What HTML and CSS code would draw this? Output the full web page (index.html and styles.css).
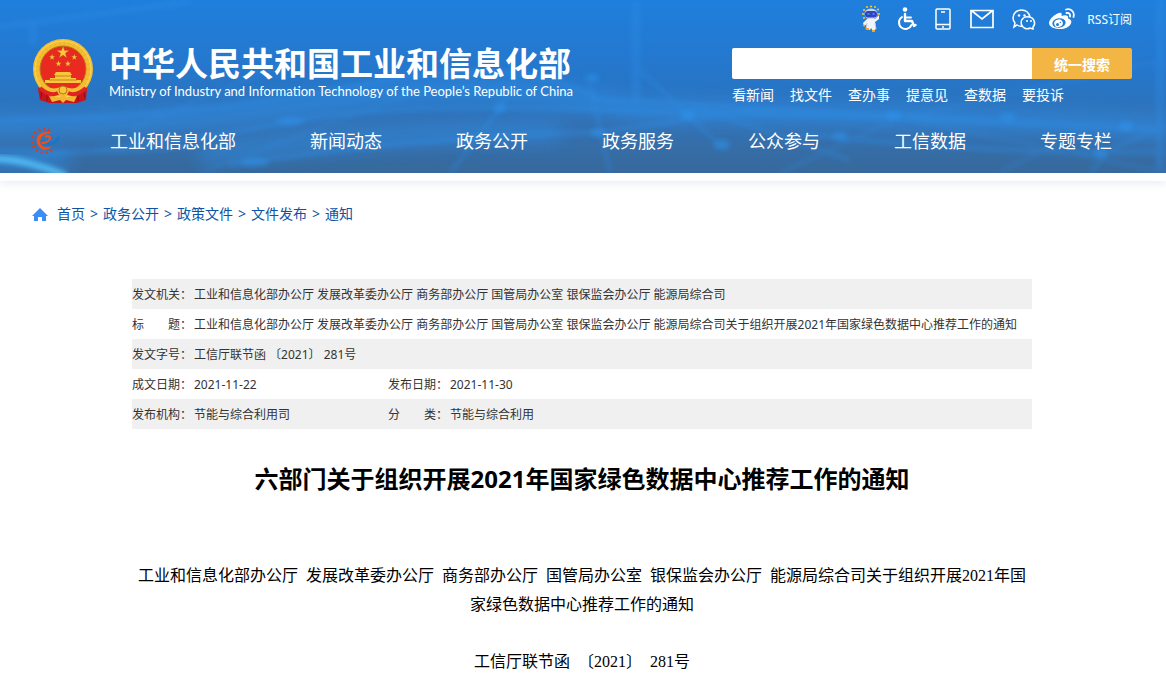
FILE: index.html
```html
<!DOCTYPE html>
<html lang="zh-CN">
<head>
  <meta charset="UTF-8" />
  <title>六部门关于组织开展2021年国家绿色数据中心推荐工作的通知</title>
  <link rel="stylesheet" href="styles.css">
</head>
<body>
  <header class="header">
    <svg class="header-bg" viewBox="0 0 1166 173" preserveAspectRatio="none" aria-hidden="true">
      <defs>
        <filter id="soft" x="-20%" y="-20%" width="140%" height="140%"><feGaussianBlur stdDeviation="2.500" /></filter>
        <filter id="glow" x="-50%" y="-50%" width="200%" height="200%"><feGaussianBlur stdDeviation="9" /></filter>
      </defs>
      <g fill="none" stroke="#2f8fe8" filter="url(#glow)" opacity=".6">
        <path d="M-20 125Q200 125 340 100T640 110L900 116L1166 128" stroke-width="20" />
        <path d="M200 155Q400 130 560 132" stroke-width="16" />
        <path d="M-10 162H70" stroke-width="16" />
      </g>
      <g fill="none" stroke="#2f8fe8" stroke-width="4" opacity=".45" filter="url(#soft)">
        <path d="M-10 28L190 2M-10 120Q200 118 360 85T600 100L1166 130M-10 162Q200 140 300 120T660 112L900 118L1166 130" />
        <path d="M-10 150Q120 155 200 145M230 165Q400 138 600 132L760 110M800 134Q1000 155 1166 152" />
        <path d="M450 173L495 115L520 75M610 173L590 85M720 145L640 70M850 160L690 105M1090 173L1110 150L1166 125" opacity=".7" />
        <path d="M780 173L900 118L1166 60M1000 173L1090 125M890 115L1166 173M200 173L420 90M130 130L290 60" opacity=".5" />
        <path d="M636 0V105M33 20V45M1160 0V170" stroke-width="9" opacity=".7" />
      </g>
      <g fill="#2f95f0" opacity=".5" filter="url(#soft)">
        <ellipse cx="290" cy="121" rx="14" ry="4" />
        <ellipse cx="255" cy="162" rx="14" ry="4" />
        <ellipse cx="500" cy="108" rx="6" ry="5" />
        <ellipse cx="592" cy="78" rx="7" ry="4" />
        <ellipse cx="688" cy="115" rx="7" ry="5" />
        <ellipse cx="722" cy="145" rx="8" ry="5" />
        <ellipse cx="598" cy="133" rx="8" ry="4" />
        <ellipse cx="840" cy="136" rx="8" ry="4" />
        <ellipse cx="893" cy="115" rx="8" ry="4" />
        <ellipse cx="1008" cy="117" rx="8" ry="4" />
        <ellipse cx="1126" cy="126" rx="7" ry="5" />
        <ellipse cx="1100" cy="153" rx="7" ry="5" />
      </g>
      <path d="M-10 158Q30 160 66 176" fill="none" stroke="#55c3fa" stroke-width="7" opacity=".85" filter="url(#soft)" />
    </svg>

    <div class="wrap">
      <div class="header-top">
        <a href="#" class="brand">
          <svg class="emblem" viewBox="0 0 62 66" role="img" aria-label="国徽">
            <path d="M9 45L6 51L8 62L17 65H45L54 62L55 50L52 44Z" fill="#c9141b" />
            <path d="M10 50L9 60M15 54V63M51 50L53 60M46 54V63" stroke="#8e0d13" stroke-width="1" />
            <circle cx="31" cy="31" r="30" fill="#f5be31" />
            <circle cx="31" cy="31" r="26.500" fill="none" stroke="#d79a22" stroke-width="5" stroke-dasharray="1 4" opacity=".3" />
            <circle cx="31" cy="31" r="28" fill="none" stroke="#ffdb62" stroke-width="1" opacity=".8" />
            <circle cx="31" cy="31" r="23" fill="#e92a20" stroke="#b9791b" stroke-width="1" />
            <g fill="#f8c83d" stroke="#a9691a" stroke-width=".3">
              <path id="star" d="M31 8L32.500 12.500H37L33.300 15.200L34.700 19.700L31 17L27.300 19.700L28.700 15.200L25 12.500H29.500Z" />
              <use href="#star" transform="translate(4.600 12) scale(.5)" />
              <use href="#star" transform="translate(26.800 12) scale(.5)" />
              <use href="#star" transform="translate(11 18.500) scale(.5)" />
              <use href="#star" transform="translate(20.400 18.500) scale(.5)" />
            </g>
            <path d="M24 34H38L40 37H39V40H44V42H49V45H13V42H18V40H23V37H22Z" fill="#f9c63c" />
            <path d="M23 38H39M17 42H45" stroke="#c7831f" stroke-width="1" />
            <path d="M10 45Q19 54 31 48Q43 54 52 45L50 51Q42 57 31 53Q20 57 12 51Z" fill="#f5be31" />
            <path d="M8 50Q18 59 26 55M54 50Q44 59 36 55" fill="none" stroke="#df2222" stroke-width="4" />
            <circle cx="31" cy="52" r="4" fill="#f7c53c" stroke="#b87619" stroke-width="1" />
            <path d="M17 58L26 60L31 57L36 60L45 58L42 64L34 62L31 65L28 62L20 64Z" fill="#f3b631" />
          </svg>
          <span class="brand-text">
            <span class="brand-cn">中华人民共和国工业和信息化部</span>
            <span class="brand-en" lang="en">Ministry of Industry and Information Technology of the People’s Republic of China</span>
          </span>
        </a>

        <div class="tools">
          <div class="icons">
            <a href="#" class="icon" title="智能问答">
              <svg width="24" height="28" viewBox="0 0 24 28">
                <g fill="#ffc51f"><circle cx="8" cy="2" r="1.100" /><circle cx="12" cy="1.500" r="1.100" /><circle cx="16" cy="2" r="1.100" /><circle cx="19" cy="4.500" r="1.100" /><circle cx="5" cy="5" r="1.100" /><circle cx="4" cy="9" r="1.100" /><circle cx="20" cy="9" r="1.100" /><circle cx="5" cy="13" r="1.100" /></g>
                <ellipse cx="12" cy="9" rx="6.500" ry="5.500" fill="#c9d6f3" />
                <rect x="6" y="6" width="12" height="6.500" rx="3" fill="#3540bd" />
                <path d="M8.500 9h2M13.500 9h2" stroke="#32a5f5" stroke-width="1.500" />
                <path d="M8 14L4 18L5 21L8 19L7 24L11 25L12 23L14 26L17 24L16 17L20 14V10L18 12L16 14Z" fill="#f1f4fc" />
                <path d="M8 18L7 24M16 18L17 24" stroke="#bfcbe9" stroke-width="1" />
                <path d="M7 24H10M13 26H16M4 20L6 21" stroke="#f8a51d" stroke-width="1.800" />
              </svg>
            </a>
            <a href="#" class="icon" title="无障碍">
              <svg width="24" height="28" viewBox="0 0 24 28" fill="none" stroke="#fff" stroke-linecap="round" stroke-linejoin="round">
                <circle cx="10" cy="4.500" r="2.300" fill="#fff" stroke="none" />
                <path d="M10 9V16H17L19 21L20.500 20" stroke-width="2.400" />
                <path d="M10 12.500H16" stroke-width="1.800" />
                <path d="M7 12A6.500 6.500 0 1 0 16.500 20" stroke-width="2" />
              </svg>
            </a>
            <a href="#" class="icon" title="手机版">
              <svg width="24" height="28" viewBox="0 0 24 28" fill="none" stroke="#fff">
                <rect x="5" y="4" width="14" height="20" rx="1" stroke-width="1.500" />
                <path d="M5 19.500H19M10 7H14" stroke-width="1.300" />
                <path d="M11 22H13" stroke-width="1.500" />
              </svg>
            </a>
            <a href="#" class="icon" title="邮箱">
              <svg width="30" height="28" viewBox="0 0 30 28" fill="none" stroke="#fff" stroke-width="1.700">
                <path d="M4 5.500H26V22.500H4ZM5 6L15 14L25 6" />
              </svg>
            </a>
            <a href="#" class="icon" title="微信">
              <svg width="28" height="28" viewBox="0 0 28 28" fill="none" stroke="#fff" stroke-width="1.500">
                <path d="M14 21Q11 22 8 20L5 22L6 18A8 8 0 0 1 4 13C4 8 8 5 12.500 5S20 8 21 12" />
                <path d="M20 12A6 6 0 1 0 21 23L24 24V22A6 6 0 0 0 20 12Z" />
                <g fill="#fff" stroke="none"><circle cx="10" cy="10.500" r="1.200" /><circle cx="15.500" cy="10.500" r="1.200" /><circle cx="18" cy="16" r="1" /><circle cx="22" cy="16" r="1" /></g>
              </svg>
            </a>
            <a href="#" class="icon" title="微博">
              <svg width="26" height="28" viewBox="0 0 26 28">
                <path d="M10 8C13 7 13 9 12.500 11C16 9.500 20 10 19 13.500C22 14.500 23 16 22 18.500C20 22.500 15 24.500 9.500 24C3.500 23.500 0 21 0 18C0 14 6 9 10 8Z" fill="#fff" />
                <ellipse cx="10" cy="18" rx="6.700" ry="4.700" transform="rotate(-8 10 18)" fill="#267dcf" />
                <ellipse cx="9.500" cy="18.300" rx="4.300" ry="3.800" transform="rotate(-20 9.500 18.300)" fill="#fff" />
                <circle cx="8.500" cy="19.500" r="1.500" fill="#267dcf" />
                <circle cx="11.300" cy="17.500" r=".7" fill="#267dcf" />
                <path d="M17 4.500C22 3 26 7 24.500 12M17.500 8C20 7.500 21.500 9 21 11.500" fill="none" stroke="#fff" stroke-width="1.800" stroke-linecap="round" />
              </svg>
            </a>
            <a href="#" class="rss">RSS订阅</a>
          </div>

          <form class="search">
            <input type="text" class="search-input" name="q" aria-label="搜索" />
            <button type="submit" class="search-btn">统一搜索</button>
          </form>

          <div class="quick">
            <a href="#">看新闻</a>
            <a href="#">找文件</a>
            <a href="#">查办事</a>
            <a href="#">提意见</a>
            <a href="#">查数据</a>
            <a href="#">要投诉</a>
          </div>
        </div>
      </div>

      <nav class="nav">
        <a href="#" class="nav-logo" aria-label="首页">
          <svg width="28" height="26" viewBox="2 0 28 26" fill="none">
            <path d="M22 22A12 12 0 1 1 21 3" stroke="#e23a1c" stroke-width="3" stroke-dasharray="2 3" />
            <path d="M22 18C19 22 14 22.500 10.500 20C4 15 6 6 13 4.500C17 3.500 21 4 22 5.500C19 5 14.500 5.500 12 8.500C8.500 13 10 18 15 19C18 19.500 20 19 22 18Z" fill="#f4511a" />
            <path d="M12 15C16 15 19 13 20 10.500C21 8 17 7.500 15 9" stroke="#f4511a" stroke-width="2" />
            <path d="M16 17C23 17.500 29 14 30 8L27 9C25.500 13 22 14.500 18 15Z" fill="#1377cb" />
          </svg>
        </a>
        <div class="nav-links">
          <a href="#">工业和信息化部</a>
          <a href="#">新闻动态</a>
          <a href="#">政务公开</a>
          <a href="#">政务服务</a>
          <a href="#">公众参与</a>
          <a href="#">工信数据</a>
          <a href="#">专题专栏</a>
        </div>
      </nav>
    </div>
  </header>
  <div class="header-line"></div>

  <main class="wrap">
    <div class="crumbs">
      <svg class="home" width="16" height="14" viewBox="0 0 16 14" aria-hidden="true">
        <path d="M8 1L16 9H14V14H10V10H6V14H2V9H0Z" fill="#3d8bf5" />
      </svg>
      <a href="#">首页</a>
      <span>&gt;</span>
      <a href="#">政务公开</a>
      <span>&gt;</span>
      <a href="#">政策文件</a>
      <span>&gt;</span>
      <a href="#">文件发布</a>
      <span>&gt;</span>
      <a href="#">通知</a>
    </div>

    <article class="article">
      <table class="info">
        <colgroup>
          <col class="col-label" />
          <col class="col-value" />
          <col class="col-label" />
          <col />
        </colgroup>
        <tr>
          <th>发文机关：</th>
          <td colspan="3">工业和信息化部办公厅 发展改革委办公厅 商务部办公厅 国管局办公室 银保监会办公厅 能源局综合司</td>
        </tr>
        <tr>
          <th>标　　题：</th>
          <td colspan="3">工业和信息化部办公厅 发展改革委办公厅 商务部办公厅 国管局办公室 银保监会办公厅 能源局综合司关于组织开展2021年国家绿色数据中心推荐工作的通知</td>
        </tr>
        <tr>
          <th>发文字号：</th>
          <td colspan="3">工信厅联节函 〔2021〕 281号</td>
        </tr>
        <tr>
          <th>成文日期：</th>
          <td>2021-11-22</td>
          <th>发布日期：</th>
          <td>2021-11-30</td>
        </tr>
        <tr>
          <th>发布机构：</th>
          <td>节能与综合利用司</td>
          <th>分　　类：</th>
          <td>节能与综合利用</td>
        </tr>
      </table>

      <h1>六部门关于组织开展2021年国家绿色数据中心推荐工作的通知</h1>

      <div class="content">
        <p>工业和信息化部办公厅&nbsp; 发展改革委办公厅&nbsp; 商务部办公厅&nbsp; 国管局办公室&nbsp; 银保监会办公厅&nbsp; 能源局综合司关于组织开展2021年国家绿色数据中心推荐工作的通知</p>
        <p>工信厅联节函&nbsp; 〔2021〕&nbsp; 281号</p>
      </div>
    </article>
  </main>
</body>
</html>
```
FILE: styles.css
```css
body {
  margin: 0;
  background: #fff;
  color: #333;
  font-family: "Noto Sans", "Noto Sans CJK SC", sans-serif;
  font-size: 12px;
}

a {
  color: inherit;
  text-decoration: none;
}

.wrap {
  max-width: 1100px;
  margin: 0 auto;
  padding: 0 34px 0 32px;
}

/* header */
.header {
  position: relative;
  background: linear-gradient(#1f7fdd, #2676c9 45%, #3470b0 75%, #37699c);
  color: #fff;
}

.header-bg {
  position: absolute;
  left: 0;
  top: 0;
  width: 100%;
  height: 100%;
}

.header .wrap {
  position: relative;
}

.header-line {
  height: 8px;
  background: #fff;
  box-shadow: 0 2px 8px #e3e9f5;
}

.header-top {
  display: flex;
  justify-content: space-between;
}

.brand {
  display: flex;
  gap: 15px;
  padding-top: 38px;
}

.emblem {
  width: 62px;
  height: 66px;
}

.brand-text {
  display: flex;
  flex-direction: column;
  padding-top: 4px;
  white-space: nowrap;
}

.brand-cn {
  font-family: "Noto Sans CJK SC", sans-serif;
  font-size: 33px;
  font-weight: bold;
  line-height: 40px;
}

.brand-en {
  font-family: Lato, "Noto Sans", sans-serif;
  font-size: 13px;
  line-height: 18px;
}

.tools {
  width: 400px;
}

.icons {
  display: flex;
  justify-content: flex-end;
  align-items: center;
  gap: 12px;
  height: 38px;
}

.icon svg {
  display: block;
}

.search {
  display: flex;
  height: 31px;
  margin-top: 10px;
}

.search-input {
  flex: 1;
  min-width: 0;
  padding: 0 10px;
  border: none;
  border-radius: 2px 0 0 2px;
  background: #fff;
}

.search-btn {
  width: 100px;
  padding: 0;
  border: none;
  border-radius: 0 2px 2px 0;
  background: #f3b645;
  color: #fff;
  font-family: inherit;
  font-size: 14px;
  font-weight: bold;
  cursor: pointer;
}

.quick {
  display: flex;
  gap: 16px;
  margin-top: 6px;
  font-size: 14px;
  line-height: 20px;
}

.nav {
  display: flex;
  align-items: center;
  gap: 50px;
  height: 65px;
  padding-right: 20px;
  margin-top: 3px;
}

.nav-logo svg {
  display: block;
}

.nav-links {
  flex: 1;
  display: flex;
  justify-content: space-between;
  font-size: 18px;
  line-height: 26px;
  white-space: nowrap;
}

/* breadcrumb */
.crumbs {
  display: flex;
  align-items: center;
  gap: 5px;
  padding-top: 23px;
  color: #0f53a3;
  font-size: 14px;
  line-height: 20px;
}

.home {
  margin-right: 4px;
}

/* article */
.article {
  max-width: 900px;
  margin: 0 auto;
  padding-top: 55px;
}

.info {
  width: 100%;
  border-collapse: collapse;
  table-layout: fixed;
}

.col-label {
  width: 62px;
}

.col-value {
  width: 194px;
}

.info tr:nth-child(odd) {
  background: #f0f0f0;
}

.info th,
.info td {
  height: 30px;
  padding: 0;
  font-weight: normal;
  text-align: left;
  white-space: nowrap;
}

h1 {
  margin: 32px 0 0;
  color: #000;
  font-size: 24px;
  line-height: 36px;
  text-align: center;
}

.content {
  padding-top: 64px;
  color: #000;
  font-family: "Liberation Serif", "Noto Sans CJK SC", serif;
  font-size: 16px;
  line-height: 29px;
  text-align: center;
}

.content p {
  margin: 0 0 28px;
}
```
